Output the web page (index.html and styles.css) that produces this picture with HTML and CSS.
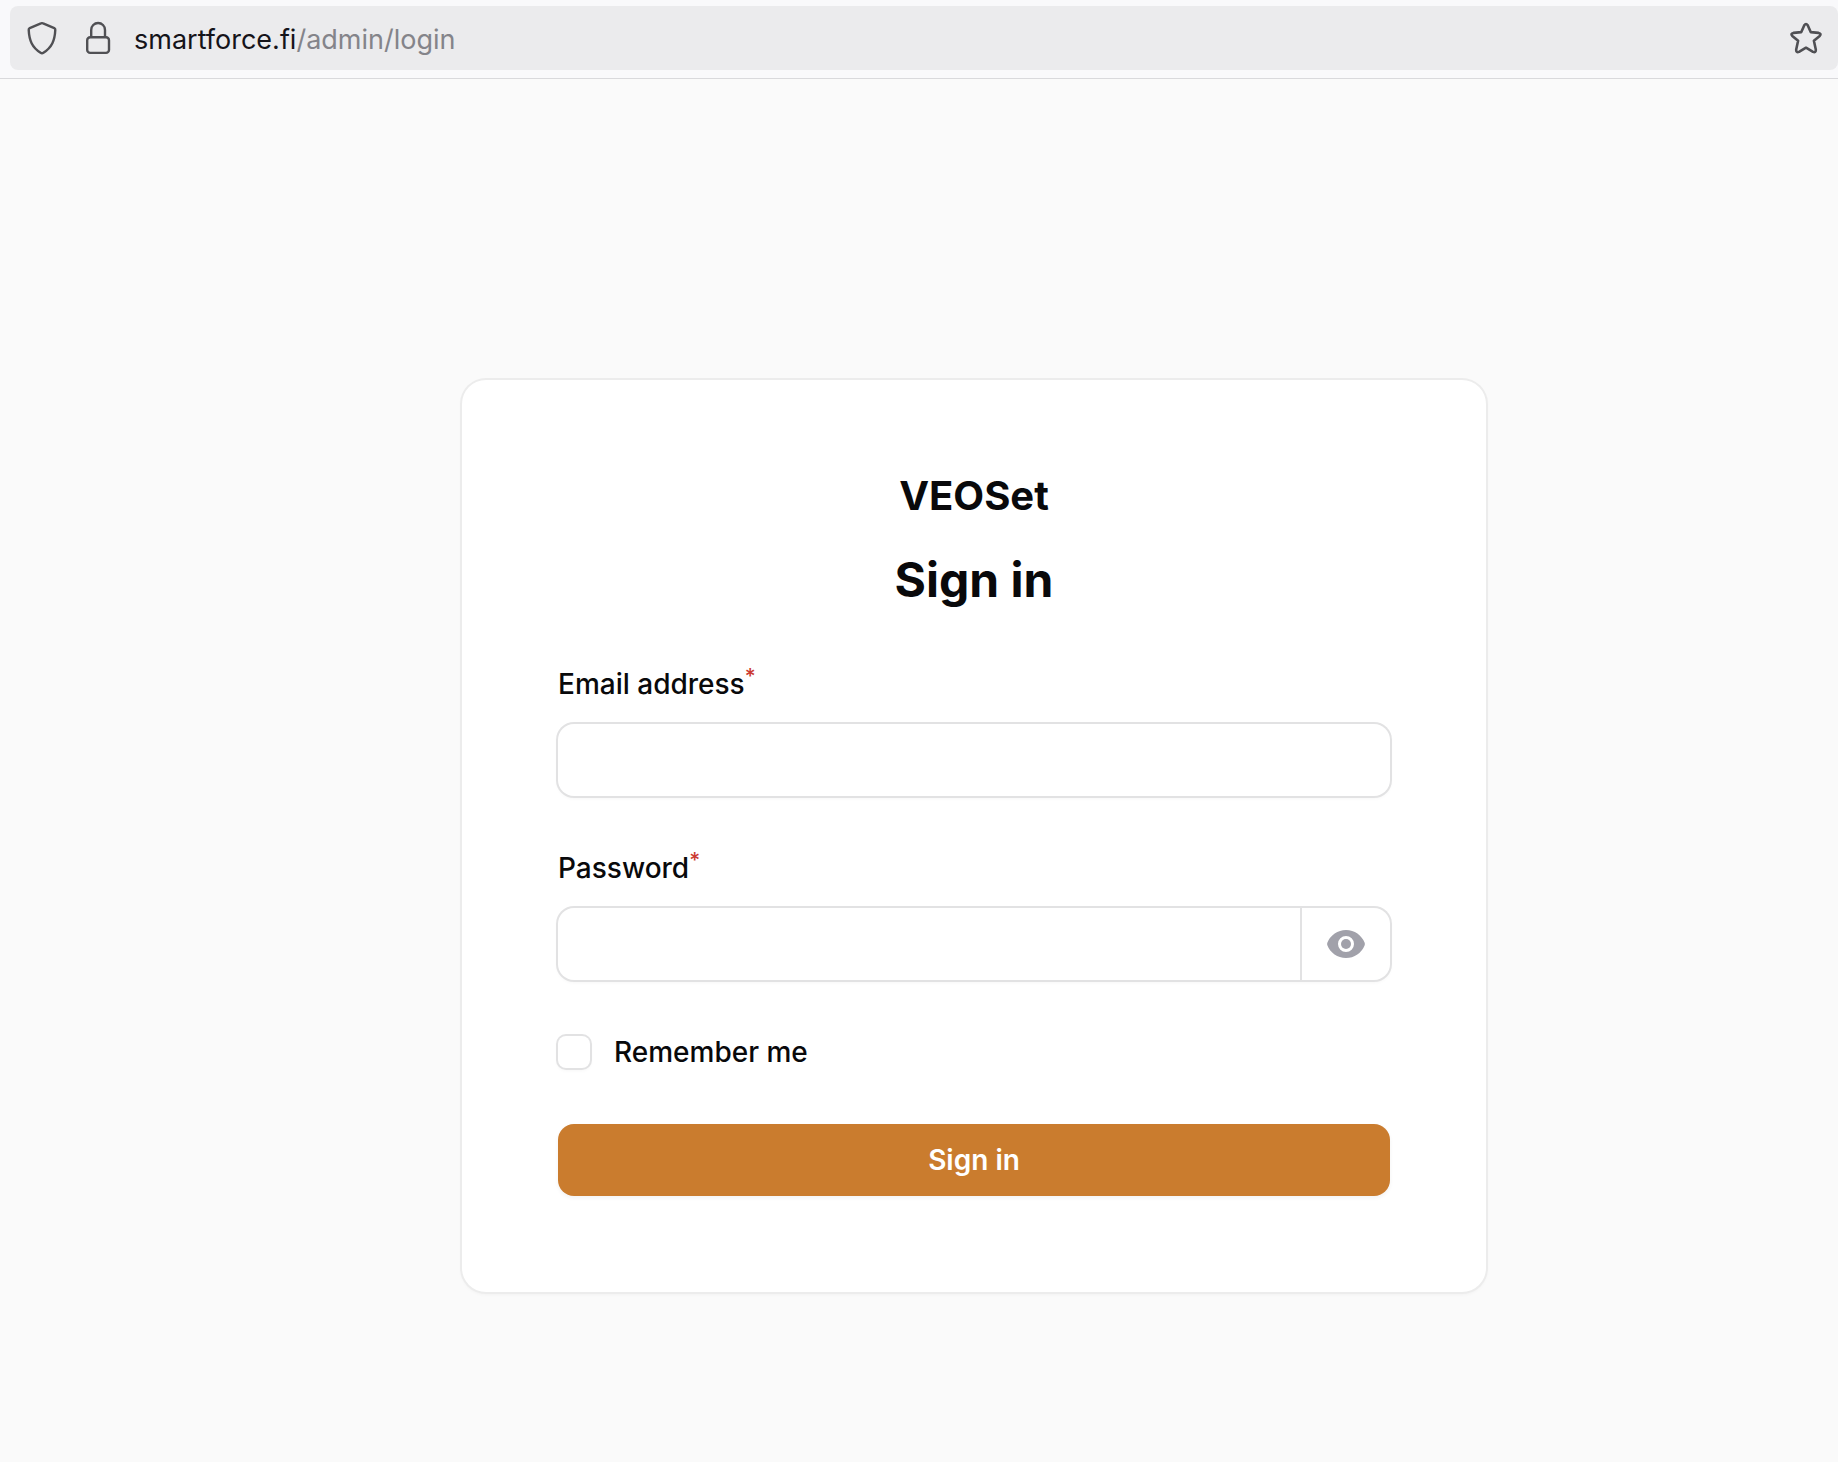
FILE: index.html
```html
<!DOCTYPE html>
<html lang="en">
<head>
<meta charset="utf-8">
<meta name="viewport" content="width=device-width, initial-scale=1">
<title>Sign in - VEOSet</title>
<link rel="stylesheet" href="styles.css">
</head>
<body>
<header class="toolbar">
  <div class="address-bar">
    <button class="bar-button" type="button" aria-label="Tracking protection">
      <svg width="32" height="36" viewBox="0 0 32 36" fill="none" stroke="currentColor" stroke-width="2.4" stroke-linejoin="round"><path d="M14.900 3.400Q16 2.900 17.100 3.400L28.300 8.100Q29.400 8.600 29.300 9.800C28.800 20.500 26 27.200 17.400 32.800Q16 33.700 14.600 32.800C6 27.200 3.200 20.500 2.700 9.800Q2.600 8.600 3.700 8.100Z"/></svg>
    </button>
    <button class="bar-button" type="button" aria-label="Connection is secure">
      <svg width="32" height="36" viewBox="0 0 32 36" fill="none" stroke="currentColor" stroke-width="2.4"><rect x="5.200" y="17.200" width="21.800" height="15.700" rx="3"/><path d="M9.200 17V9.900a6.900 6.900 0 0 1 13.800 0V17"/></svg>
    </button>
    <a class="url" href="#">smartforce.fi<span class="url-path">/admin/login</span></a>
    <button class="bar-button" type="button" aria-label="Bookmark this page">
      <svg width="32" height="36" viewBox="0 0 32 36" fill="none" stroke="currentColor" stroke-width="2.6" stroke-linejoin="round"><path d="M14.300 5.200Q16 2.700 17.700 5.200L20.700 12.100L28.600 12.900Q31.700 13.600 29.700 15.900L23.900 20.800L25.800 29.500Q26 33 23 31.900L16 27.700L9 31.900Q6 33 6.200 29.500L8.100 20.800L2.300 15.900Q.3 13.600 3.400 12.900L11.300 12.100Z"/></svg>
    </button>
  </div>
</header>
<main class="page">
  <section class="card">
    <div class="brand">VEOSet</div>
    <h1 class="heading">Sign in</h1>
    <form class="form">
      <div class="field">
        <label class="label" for="email">Email address<sup class="required">*</sup></label>
        <div class="control"><input class="input" id="email" type="email" required></div>
      </div>
      <div class="field">
        <label class="label" for="password">Password<sup class="required">*</sup></label>
        <div class="control">
          <input class="input" id="password" type="password" required>
          <button class="reveal" type="button" aria-label="Show password">
            <svg width="40" height="40" viewBox="0 0 20 20" fill="currentColor"><path d="M10 12.5a2.5 2.5 0 1 0 0-5 2.5 2.5 0 0 0 0 5Z"/><path fill-rule="evenodd" d="M.664 10.59a1.651 1.651 0 0 1 0-1.186A10.004 10.004 0 0 1 10 3c4.257 0 7.893 2.66 9.336 6.41.147.381.146.804 0 1.186A10.004 10.004 0 0 1 10 17c-4.257 0-7.893-2.66-9.336-6.41ZM14 10a4 4 0 1 1-8 0 4 4 0 0 1 8 0Z"/></svg>
          </button>
        </div>
      </div>
      <label class="remember" for="remember"><input class="checkbox" id="remember" type="checkbox">Remember me</label>
      <button class="submit" type="submit">Sign in</button>
    </form>
  </section>
</main>
</body>
</html>
```
FILE: styles.css
```css
* {
  box-sizing: border-box;
}

body {
  margin: 0;
  background: #fafafa;
  color: #09090b;
  font-family: Inter, "Liberation Sans", sans-serif;
  font-size: 28px;
  line-height: 48px;
}

button,
input {
  font: inherit;
  color: inherit;
}

button {
  margin: 0;
  padding: 0;
  border: 0;
  background: none;
  cursor: pointer;
}

svg {
  display: block;
}

.toolbar {
  padding: 6px 0 8px 10px;
  background: #f9f9fb;
  border-bottom: 1px solid #d9d9dc;
}

.address-bar {
  display: flex;
  align-items: center;
  gap: 16px;
  height: 64px;
  padding: 0 12px;
  border-radius: 8px;
  background: #ebebed;
}

.bar-button {
  padding: 0 4px;
  color: #505054;
}

.url {
  flex: 1;
  padding-top: 4px;
  color: #15141a;
  font-size: 27px;
  text-decoration: none;
}

.url-path {
  color: #84848a;
}

.page {
  display: flex;
  justify-content: center;
  padding: 301px 0 168px 110px;
}

.card {
  width: 100%;
  max-width: 1024px;
  padding: 96px;
  border-radius: 24px;
  background: #fff;
  box-shadow: 0 0 0 2px #ececec, 0 2px 4px rgba(0, 0, 0, 0.05);
}

.brand {
  margin-bottom: 32px;
  font-size: 40px;
  font-weight: 700;
  line-height: 40px;
  text-align: center;
}

.heading {
  margin: 0 0 48px;
  font-size: 48px;
  font-weight: 700;
  line-height: 64px;
  text-align: center;
}

.form {
  display: grid;
  gap: 48px;
}

.field {
  display: grid;
  gap: 16px;
}

.label,
.remember {
  font-weight: 500;
}

.required {
  color: #cb3a31;
  font-size: 21px;
  line-height: 0;
}

.control {
  display: flex;
  height: 72px;
  border-radius: 16px;
  background: #fff;
  box-shadow: 0 0 0 2px #e2e2e3, 0 2px 4px rgba(0, 0, 0, 0.05);
}

.input {
  flex: 1;
  min-width: 0;
  padding: 0 24px;
  border: 0;
  border-radius: 16px;
  outline: 0;
  background: transparent;
}

.reveal {
  padding: 0 24px;
  border-left: 2px solid #e2e2e3;
  box-sizing: content-box;
  color: #a1a1aa;
}

.remember {
  display: flex;
  align-items: center;
  gap: 24px;
}

.checkbox {
  appearance: none;
  width: 32px;
  height: 32px;
  margin: 0;
  border-radius: 8px;
  background: #fff;
  box-shadow: 0 0 0 2px #e2e2e3, 0 2px 4px rgba(0, 0, 0, 0.05);
}

.checkbox:checked {
  background: #ca7c2e;
}

.submit {
  height: 72px;
  border-radius: 16px;
  background: #ca7c2e;
  box-shadow: 0 2px 4px rgba(0, 0, 0, 0.05);
  color: #fff;
  font-weight: 600;
}
```
